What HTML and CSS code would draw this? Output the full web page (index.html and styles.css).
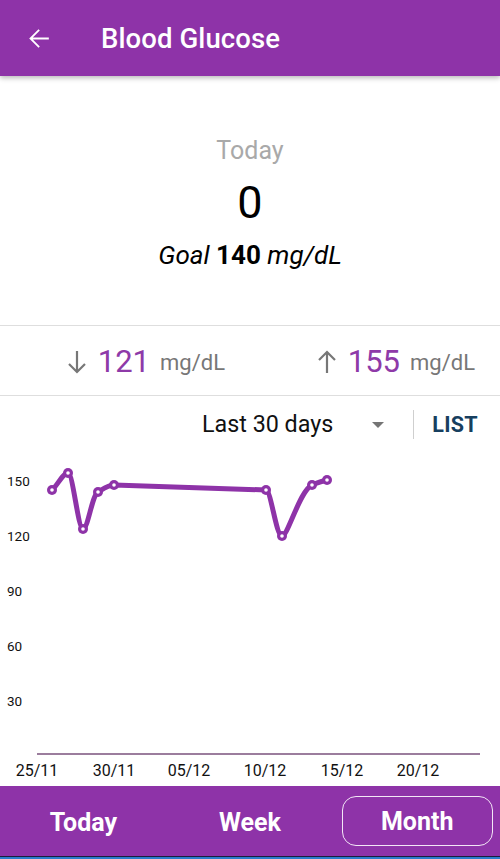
FILE: index.html
```html
<!DOCTYPE html>
<html>
<head>
<meta charset="utf-8">
<link rel="stylesheet" href="styles.css">
</head>
<body>
<div class="app">
  <header class="topbar">
    <svg class="back" width="31" height="31" viewBox="0 0 24 24"><path d="M20 11.2H7.6l5.4-5.4L12 4.8 4.8 12l7.2 7.2 1-1-5.4-5.4H20z" fill="#fff"/></svg>
    <h1 class="title">Blood Glucose</h1>
  </header>

  <section class="summary">
    <div class="today">Today</div>
    <div class="count">0</div>
    <div class="goal"><i>Goal</i> <b>140</b> <i>mg/dL</i></div>
  </section>

  <section class="stats">
    <div class="stat">
      <svg class="arrow" width="20" height="26" viewBox="0 0 20 26"><path d="M10 2v21M2 15l8 8 8-8" fill="none" stroke="#777" stroke-width="2.2"/></svg>
      <span class="num">121</span><span class="unit">mg/dL</span>
    </div>
    <div class="stat">
      <svg class="arrow" width="20" height="26" viewBox="0 0 20 26"><path d="M10 24V3M2 11l8-8 8 8" fill="none" stroke="#777" stroke-width="2.2"/></svg>
      <span class="num">155</span><span class="unit">mg/dL</span>
    </div>
  </section>

  <section class="controls">
    <span class="range">Last 30 days</span>
    <svg class="caret" width="12" height="6" viewBox="0 0 12 6"><path d="M0 0h12L6 6z" fill="#757575"/></svg>
    <span class="vdiv"></span>
    <span class="list">LIST</span>
  </section>

  <section class="chart">
    <svg width="500" height="334" viewBox="0 452 500 334">
      <g class="ylab">
        <text x="7" y="486">150</text>
        <text x="7" y="541">120</text>
        <text x="7" y="596">90</text>
        <text x="7" y="651">60</text>
        <text x="7" y="706">30</text>
      </g>
      <line x1="37" y1="754" x2="480" y2="754" stroke="#9b7d9d" stroke-width="2"/>
      <g class="xlab">
        <text x="37" y="776">25/11</text>
        <text x="114" y="776">30/11</text>
        <text x="189" y="776">05/12</text>
        <text x="265" y="776">10/12</text>
        <text x="342" y="776">15/12</text>
        <text x="418" y="776">20/12</text>
      </g>
      <path d="M52 490 C57 486 63 473 68 473 C73 473 78 529 83 529 C88 529 92 495 98 492 C103 489 108 485 114 485 L266 490 C271 490 276 536 282 536 C288 536 300 490 312 485 C317 483 322 481 327 480" fill="none" stroke="#8e33a8" stroke-width="5" stroke-linejoin="round" stroke-linecap="round"/>
      <g fill="#8e33a8">
        <circle cx="52" cy="490" r="5"/><circle cx="68" cy="473" r="5"/><circle cx="83" cy="529" r="5"/>
        <circle cx="98" cy="492" r="5"/><circle cx="114" cy="485" r="5"/><circle cx="266" cy="490" r="5"/>
        <circle cx="282" cy="536" r="5"/><circle cx="312" cy="485" r="5"/><circle cx="327" cy="480" r="5"/>
      </g>
      <g fill="#fff">
        <circle cx="52" cy="490" r="1.8"/><circle cx="68" cy="473" r="1.8"/><circle cx="83" cy="529" r="1.8"/>
        <circle cx="98" cy="492" r="1.8"/><circle cx="114" cy="485" r="1.8"/><circle cx="266" cy="490" r="1.8"/>
        <circle cx="282" cy="536" r="1.8"/><circle cx="312" cy="485" r="1.8"/><circle cx="327" cy="480" r="1.8"/>
      </g>
    </svg>
  </section>

  <nav class="tabs">
    <div class="tab">Today</div>
    <div class="tab">Week</div>
    <div class="tab"><span class="active">Month</span></div>
  </nav>
  <div class="edge"></div>
</div>
</body>
</html>
```

FILE: styles.css
```css
* { box-sizing: border-box; }
html, body { margin: 0; padding: 0; background: #fff; }
body { font-family: Roboto, "Noto Sans", sans-serif; width: 500px; height: 859px; overflow: hidden; }
.app { display: flex; flex-direction: column; height: 859px; }

.topbar {
  height: 76px; flex: none; background: #8e33a8; display: flex; align-items: center;
  padding-left: 23px; box-shadow: 0 2px 5px rgba(0,0,0,0.28); position: relative; z-index: 1;
}
.back { margin-top: 1px; }
.title { margin: 0 0 0 47px; color: #fff; font-weight: 500; font-size: 27.5px; letter-spacing: 0.1px; margin-top: 1px; }

.summary { height: 250px; flex: none; display: flex; flex-direction: column; align-items: center; padding-top: 60px; border-bottom: 1px solid #dedede; }
.today { color: #a9a9a9; font-size: 25px; line-height: 30px; }
.count { color: #000; font-size: 45px; line-height: 74px; }
.goal { color: #000; font-size: 26px; line-height: 30px; }
.goal b { font-weight: 700; }

.stats { height: 70px; flex: none; display: grid; grid-template-columns: 1fr 1fr; border-bottom: 1px solid #dedede; }
.stat { display: flex; align-items: center; justify-content: flex-end; padding-right: 25px; padding-top: 2px; }
.arrow { margin-right: 11px; }
.num { color: #8e3aa8; font-size: 31px; margin-right: 10px; }
.unit { color: #777; font-size: 22px; margin-top: 2px; }

.controls { height: 56px; flex: none; display: flex; align-items: center; justify-content: flex-end; padding-right: 22px; }
.range { color: #111; font-size: 23.3px; margin-right: 39px; }
.caret { margin-right: 29px; margin-top: 1px; }
.vdiv { width: 1px; height: 29px; background: #cfcfcf; margin-right: 18px; }
.list { color: #173f5f; font-weight: 700; font-size: 21.5px; letter-spacing: 0.3px; }

.chart { height: 334px; flex: none; overflow: hidden; }
.chart svg { display: block; }
.ylab text { font-family: Roboto, sans-serif; font-size: 13.5px; fill: #111; }
.xlab text { font-family: Roboto, sans-serif; font-size: 16px; fill: #111; text-anchor: middle; }

.tabs { height: 70px; flex: none; background: #8e33a8; display: grid; grid-template-columns: 1fr 1fr 1fr; }
.tab { display: flex; align-items: center; justify-content: center; color: #fff; font-weight: 700; font-size: 25px; padding-top: 2px; }
.active { width: 151px; height: 50px; border: 1.5px solid #f3e6f6; border-radius: 14px; display: flex; align-items: center; justify-content: center; margin-right: -1px; margin-top: -2px; padding-top: 1px; }
.edge { height: 3px; flex: none; background: #2a7ccc; border-top: 1px solid #1c1c3c; }
```
